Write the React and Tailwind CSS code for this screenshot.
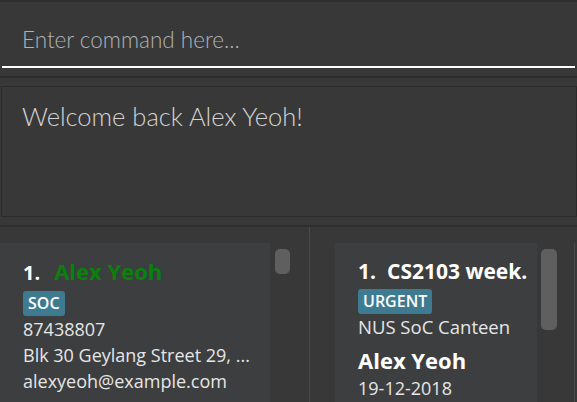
export default function App() {
  const font = { fontFamily: '"Open Sans", "Segoe UI", sans-serif' };
  const lato = { fontFamily: 'Lato, "Open Sans", sans-serif' };
  return (
    <div className="h-[402px] w-[577px] overflow-hidden bg-[#383838] flex flex-col" style={font}>
      {/* command box */}
      <div className="h-[76px] shrink-0 border-t-2 border-[#2f2f2f] pt-[20px] px-[2px]">
        <div className="h-[46px] border-b-2 border-white pl-[20px] text-[22.5px] font-light leading-[36px] text-[#aeb3b8]" style={lato}>
          Enter command here...
        </div>
      </div>
      <div className="h-[2px] shrink-0 bg-[#2c2c2c]" />
      {/* result display */}
      <div className="shrink-0 pt-[8px] pl-[1px]">
        <div className="h-[131px] border border-[#2a2a2a] bg-[#383838] px-[20px] pt-[13px] text-[25.5px] font-light leading-[32px] text-[#d4d4d4]" style={lato}>
          Welcome back Alex Yeoh!
        </div>
      </div>
      <div className="h-[8px] shrink-0" />
      <div className="h-[2px] shrink-0 bg-[#2e2e2e]" />
      {/* lists */}
      <div className="flex flex-1 min-h-0">
        <div className="flex w-[309px] shrink-0 pt-[16px]">
          <div className="w-[270px] shrink-0 bg-[#3c3e3f] pl-[23px] pt-[14px] text-[18px] leading-[26px] text-[#e6e6e6]">
            <div className="flex items-baseline font-bold leading-[28px]">
              <span className="text-[20px] text-white">1.</span>
              <span className="ml-[14px] text-[22px] text-[#0b800b]">Alex Yeoh</span>
            </div>
            <div className="mt-[4px] inline-block rounded-[3px] bg-[#3e7b91] px-[5px] text-[16px] font-semibold leading-[25px] text-white">SOC</div>
            <div>87438807</div>
            <div className="whitespace-nowrap">Blk 30 Geylang Street 29, ...</div>
            <div>alexyeoh@example.com</div>
          </div>
          <div className="ml-[5px] mt-[6px] h-[25px] w-[15px] rounded-[5px] bg-[#5f5f5f]" />
        </div>
        <div className="w-[1px] shrink-0 bg-[#4a4a4a]" />
        <div className="flex flex-1 pt-[16px] pl-[25px]">
          <div className="w-[202px] shrink-0 bg-[#3c3e3f] pl-[23px] pt-[14px] text-[18px] leading-[26px] text-[#e6e6e6] overflow-hidden">
            <div className="flex items-baseline font-bold whitespace-nowrap text-white text-[21px] leading-[28px]">
              <span>1.</span>
              <span className="ml-[11px]">CS2103 week.</span>
            </div>
            <div className="mt-[4px] inline-block rounded-[3px] bg-[#3e7b91] px-[5px] text-[16px] font-semibold leading-[25px] text-white">URGENT</div>
            <div className="text-[18.5px]">NUS SoC Canteen</div>
            <div className="mt-[6px] text-[22px] font-bold text-white leading-[28px]">Alex Yeoh</div>
            <div className="mt-[1px]">19-12-2018</div>
          </div>
          <div className="ml-[4px] mt-[6px] h-[81px] w-[16px] rounded-[5px] bg-[#5f5f5f]" />
          <div className="ml-auto w-[1px] mr-[2px] bg-[#4a4a4a]" />
        </div>
      </div>
    </div>
  );
}
